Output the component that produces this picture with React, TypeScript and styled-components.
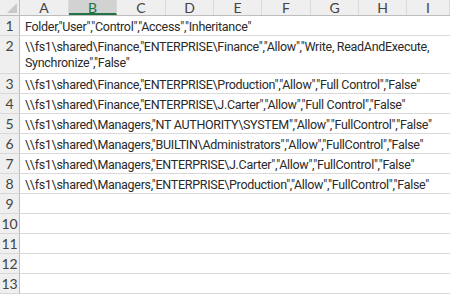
import React from "react";
import styled, { createGlobalStyle } from "styled-components";

const GlobalStyle = createGlobalStyle`
    html, body { margin: 0; padding: 0; background: #fff; overflow: hidden; }
    body { font-family: "Roboto", "Lato", sans-serif; }
`;

const Sheet = styled.div`
    width: 450px;
    height: 300px;
    overflow: hidden;
    display: flex;
    flex-direction: column;
`;

const HeaderRow = styled.div`
    display: flex;
    height: 16px;
    flex: none;
    background: #efefef;
    border-bottom: 1px solid #bdbdbd;
    box-sizing: border-box;
`;

const Corner = styled.div`
    width: 20px;
    flex: none;
    position: relative;
    border-right: 1px solid #bdbdbd;
    box-sizing: border-box;
    &::after {
        content: "";
        position: absolute;
        right: 2px;
        bottom: 2px;
        border-style: solid;
        border-width: 0 0 10px 10px;
        border-color: transparent transparent #c9c9c9 transparent;
    }
`;

const ColHead = styled.div<{ $w: number; $active?: boolean }>`
    width: ${(p) => p.$w}px;
    flex: none;
    box-sizing: border-box;
    display: flex;
    align-items: center;
    justify-content: center;
    font-family: "Lato", sans-serif;
    font-size: 14px;
    line-height: 1;
    color: ${(p) => (p.$active ? "#217346" : "#444")};
    background: ${(p) => (p.$active ? "#d2d2d2" : "transparent")};
    border-right: 1px solid #dadada;
    border-bottom: ${(p) => (p.$active ? "2px solid #217346" : "none")};
    padding-top: ${(p) => (p.$active ? "2px" : "0")};
`;

const Row = styled.div<{ $h: number }>`
    display: flex;
    height: ${(p) => p.$h}px;
    flex: none;
    box-sizing: border-box;
`;

const RowNum = styled.div`
    width: 20px;
    flex: none;
    box-sizing: border-box;
    background: #efefef;
    border-right: 1px solid #bdbdbd;
    border-bottom: 1px solid #d8d8d8;
    color: #444;
    font-family: "Lato", sans-serif;
    font-size: 14px;
    text-align: center;
    padding-top: 3px;
    line-height: 14px;
`;

const Cell = styled.div`
    flex: 1;
    box-sizing: border-box;
    border-bottom: 1px solid #d9d9d9;
    padding: 3px 0 0 5px;
    font-size: 12.5px;
    line-height: 16px;
    letter-spacing: -0.3px;
    color: #2a2a2a;
    white-space: nowrap;
    overflow: hidden;
`;

const cols: { label: string; w: number }[] = [
    { label: "A", w: 49 },
    { label: "B", w: 48 },
    { label: "C", w: 49 },
    { label: "D", w: 48 },
    { label: "E", w: 48 },
    { label: "F", w: 49 },
    { label: "G", w: 48 },
    { label: "H", w: 48 },
    { label: "I", w: 43 },
];

const rows: string[][] = [
    [`Folder,"User","Control","Access","Inheritance"`],
    [
        `\\\\fs1\\shared\\Finance,"ENTERPRISE\\Finance","Allow","Write, ReadAndExecute,`,
        `Synchronize","False"`,
    ],
    [`\\\\fs1\\shared\\Finance,"ENTERPRISE\\Production","Allow","Full Control","False"`],
    [`\\\\fs1\\shared\\Finance,"ENTERPRISE\\J.Carter","Allow","Full Control","False"`],
    [`\\\\fs1\\shared\\Managers,"NT AUTHORITY\\SYSTEM","Allow","FullControl","False"`],
    [`\\\\fs1\\shared\\Managers,"BUILTIN\\Administrators","Allow","FullControl","False"`],
    [`\\\\fs1\\shared\\Managers,"ENTERPRISE\\J.Carter","Allow","FullControl","False"`],
    [`\\\\fs1\\shared\\Managers,"ENTERPRISE\\Production","Allow","FullControl","False"`],
    [""],
    [""],
    [""],
    [""],
    [""],
];

export default function App() {
    return (
        <>
            <GlobalStyle />
            <Sheet>
                <HeaderRow>
                    <Corner />
                    {cols.map((c) => (
                        <ColHead key={c.label} $w={c.w} $active={c.label === "B"}>
                            {c.label}
                        </ColHead>
                    ))}
                </HeaderRow>
                {rows.map((lines, i) => (
                    <Row key={i} $h={lines.length > 1 ? 38 : 20}>
                        <RowNum>{i + 1}</RowNum>
                        <Cell>
                            {lines.map((l, j) => (
                                <div key={j}>{l || "\u00a0"}</div>
                            ))}
                        </Cell>
                    </Row>
                ))}
            </Sheet>
        </>
    );
}
